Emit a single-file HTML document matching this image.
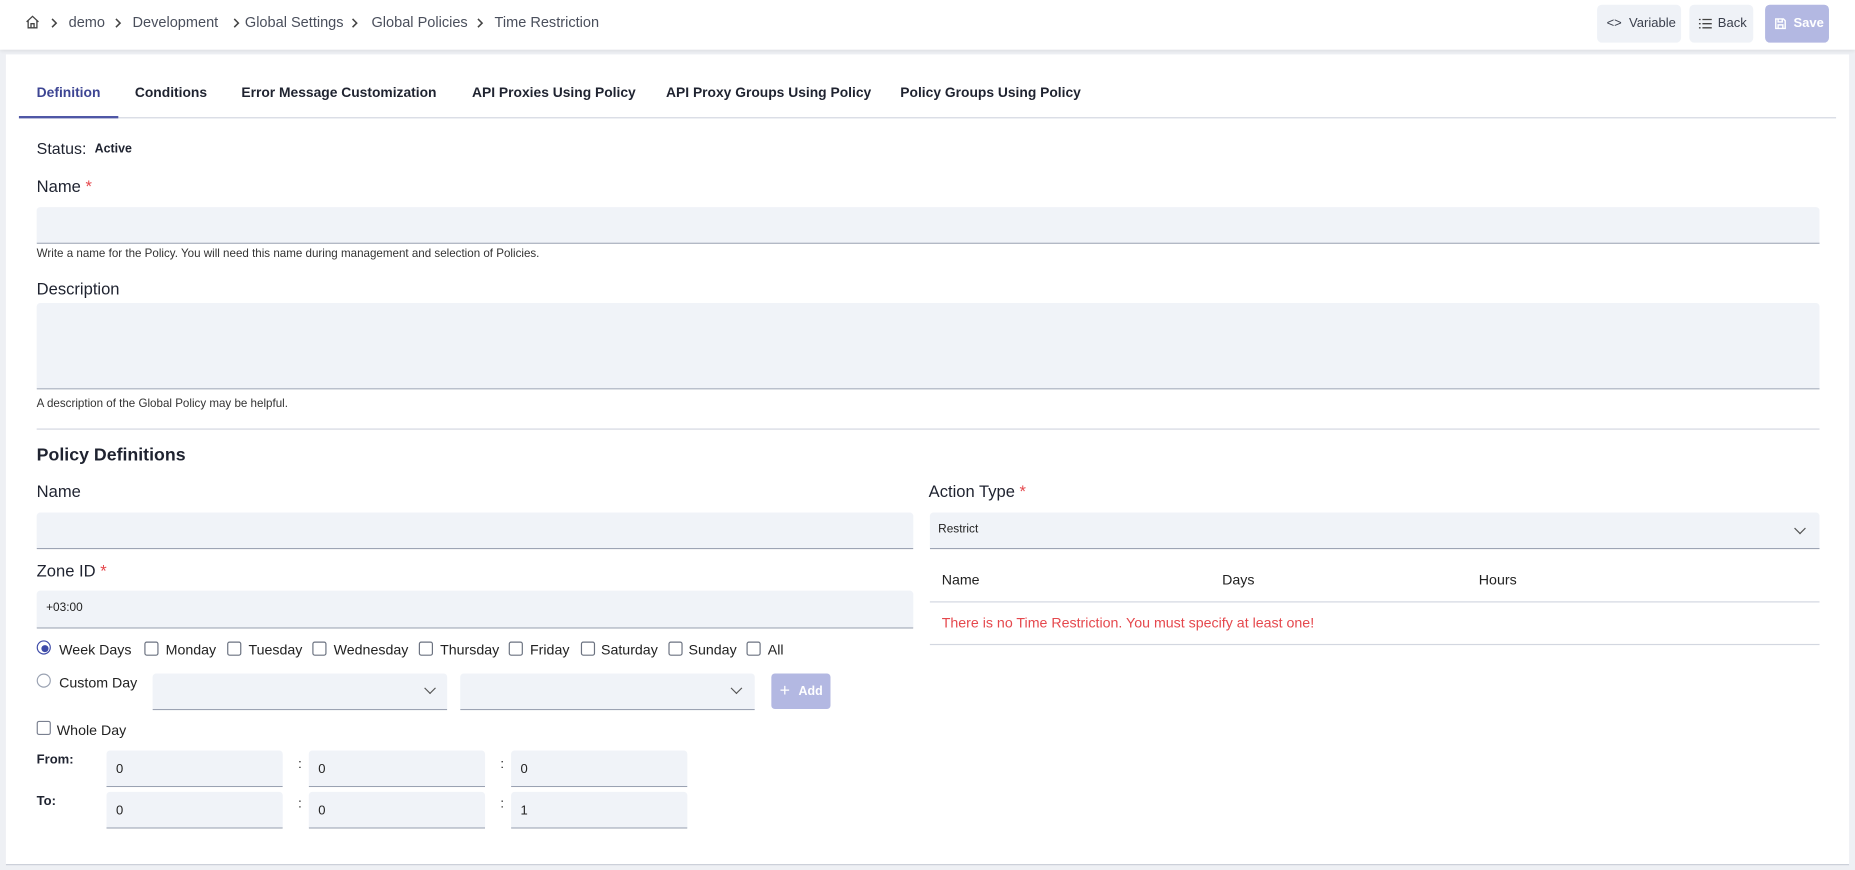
<!DOCTYPE html>
<html><head><meta charset="utf-8"><style>
html,body{margin:0;padding:0;width:1855px;height:870px;overflow:hidden;background:#eef0f4;}
#w{position:absolute;left:0;top:0;width:1568px;height:735px;transform:scale(1.18304,1.18367);transform-origin:0 0;font-family:"Liberation Sans",Arial,sans-serif;color:#1f2330;background:#eef0f4;}
.a{position:absolute;white-space:nowrap;}
.top{position:absolute;left:0;top:0;width:1568px;height:42px;background:#fff;box-shadow:0 1px 3px rgba(0,0,0,.08);}
.card{position:absolute;left:5px;top:46px;width:1558px;height:684px;background:#fff;border-bottom:1px solid #c8ccd6;}
.bc{font-size:12.3px;color:#4a4f5c;top:12px;line-height:14px;}
.chv{position:absolute;top:15px;}
.btn{position:absolute;top:4px;height:32px;border-radius:4px;background:#eff2f7;font-size:11px;color:#3a3f4c;line-height:32px;}
.tab{top:72px;font-size:11.7px;font-weight:bold;line-height:14px;color:#1f2330;}
.lbl{font-size:14px;line-height:16px;color:#1f2330;}
.req{color:#e5484d;}
.in{position:absolute;background:#f0f3f8;border-bottom:1px solid #9aa2b2;border-radius:3px 3px 0 0;}
.help{font-size:9.8px;color:#333;line-height:12px;}
.sm{font-size:11px;color:#222;line-height:12px;}
.cb{position:absolute;width:10px;height:10px;border:1px solid #6b7280;border-radius:2px;background:#fff;}
.day{font-size:12px;line-height:14px;color:#222;}
.chev{position:absolute;width:6px;height:6px;border-right:1.2px solid #555;border-bottom:1.2px solid #555;transform:rotate(45deg);}
</style></head><body><div id="w">
<div class="top"></div>
<svg class="a" style="left:21px;top:12px" width="13" height="13" viewBox="0 0 13 13" fill="none" stroke="#444" stroke-width="1.1"><path d="M1.5 6.5 L6.5 1.8 L11.5 6.5 M2.8 5.3 V11.5 H10.2 V5.3 M5.2 11.5 V8 H7.8 V11.5"/></svg>
<svg class="chv" style="left:43px" width="6" height="9" viewBox="0 0 6 9" fill="none" stroke="#444" stroke-width="1.3"><path d="M1 1L4.5 4.5L1 8"/></svg>
<div class="a bc" style="left:58px">demo</div>
<svg class="chv" style="left:97px" width="6" height="9" viewBox="0 0 6 9" fill="none" stroke="#444" stroke-width="1.3"><path d="M1 1L4.5 4.5L1 8"/></svg>
<div class="a bc" style="left:112px">Development</div>
<svg class="chv" style="left:197px" width="6" height="9" viewBox="0 0 6 9" fill="none" stroke="#444" stroke-width="1.3"><path d="M1 1L4.5 4.5L1 8"/></svg>
<div class="a bc" style="left:207px">Global Settings</div>
<svg class="chv" style="left:297px" width="6" height="9" viewBox="0 0 6 9" fill="none" stroke="#444" stroke-width="1.3"><path d="M1 1L4.5 4.5L1 8"/></svg>
<div class="a bc" style="left:314px">Global Policies</div>
<svg class="chv" style="left:403px" width="6" height="9" viewBox="0 0 6 9" fill="none" stroke="#444" stroke-width="1.3"><path d="M1 1L4.5 4.5L1 8"/></svg>
<div class="a bc" style="left:418px">Time Restriction</div>

<div class="btn" style="left:1350px;width:71px;"><span style="position:absolute;left:8px;font-size:11px;">&lt;&gt;</span><span style="position:absolute;left:27px;">Variable</span></div>
<div class="btn" style="left:1428px;width:54px;"><svg style="position:absolute;left:8px;top:11px" width="11" height="10" viewBox="0 0 11 10" stroke="#444" stroke-width="1.1"><path d="M0 1.5H1.5M3 1.5H11M0 5H1.5M3 5H11M0 8.5H1.5M3 8.5H11"/></svg><span style="position:absolute;left:24px;">Back</span></div>
<div class="btn" style="left:1492px;width:54px;background:#b3b8e2;color:#fff;font-weight:bold;"><svg style="position:absolute;left:8px;top:11px" width="10" height="10" viewBox="0 0 10 10" fill="none" stroke="#fff" stroke-width="1.2"><path d="M1 1H7.5L9 2.5V9H1Z M3 1V3.5H6.5V1 M3 9V6H7V9"/></svg><span style="position:absolute;left:24px;">Save</span></div>

<div class="card"></div>
<div class="a tab" style="left:31px;color:#3d4593;">Definition</div>
<div class="a tab" style="left:114px">Conditions</div>
<div class="a tab" style="left:204px">Error Message Customization</div>
<div class="a tab" style="left:399px">API Proxies Using Policy</div>
<div class="a tab" style="left:563px">API Proxy Groups Using Policy</div>
<div class="a tab" style="left:761px">Policy Groups Using Policy</div>
<div class="a" style="left:16px;top:99px;width:1536px;height:1px;background:#d3d7e0"></div>
<div class="a" style="left:16px;top:98px;width:84px;height:2px;background:#4f57a6"></div>

<div class="a lbl" style="left:31px;top:118px;font-size:13.5px">Status:</div>
<div class="a" style="left:80px;top:120px;font-size:10.5px;font-weight:bold;line-height:12px">Active</div>
<div class="a lbl" style="left:31px;top:149px">Name <span class="req">*</span></div>
<div class="in" style="left:31px;top:175px;width:1507px;height:30px"></div>
<div class="a help" style="left:31px;top:209px">Write a name for the Policy. You will need this name during management and selection of Policies.</div>
<div class="a lbl" style="left:31px;top:236px">Description</div>
<div class="in" style="left:31px;top:256px;width:1507px;height:72px"></div>
<div class="a help" style="left:31px;top:336px">A description of the Global Policy may be helpful.</div>
<div class="a" style="left:31px;top:362px;width:1507px;height:1px;background:#d3d7e0"></div>

<div class="a" style="left:31px;top:376px;font-size:15px;font-weight:bold;line-height:17px">Policy Definitions</div>
<div class="a lbl" style="left:31px;top:407px">Name</div>
<div class="in" style="left:31px;top:433px;width:741px;height:30px"></div>
<div class="a lbl" style="left:785px;top:407px">Action Type <span class="req">*</span></div>
<div class="in" style="left:786px;top:433px;width:752px;height:30px"></div>
<div class="a sm" style="left:793px;top:442px;font-size:10px">Restrict</div>
<div class="chev" style="left:1518px;top:443px"></div>

<div class="a lbl" style="left:31px;top:474px">Zone ID <span class="req">*</span></div>
<div class="in" style="left:31px;top:499px;width:741px;height:31px"></div>
<div class="a sm" style="left:39px;top:508px;font-size:10px">+03:00</div>

<div class="a sm" style="left:796px;top:484px;font-size:12px">Name</div>
<div class="a sm" style="left:1033px;top:484px;font-size:12px">Days</div>
<div class="a sm" style="left:1250px;top:484px;font-size:12px">Hours</div>
<div class="a" style="left:786px;top:508px;width:752px;height:1px;background:#d3d7e0"></div>
<div class="a" style="left:796px;top:519px;font-size:12px;line-height:14px;color:#e5484d">There is no Time Restriction. You must specify at least one!</div>
<div class="a" style="left:786px;top:544px;width:752px;height:1px;background:#d3d7e0"></div>

<div class="a" style="left:31px;top:541px;width:10px;height:10px;border:1.5px solid #3d4aa8;border-radius:50%;background:#fff"></div>
<div class="a" style="left:34.5px;top:544.5px;width:6px;height:6px;border-radius:50%;background:#3d4aa8"></div>
<div class="a day" style="left:50px;top:542px">Week Days</div>
<div class="cb" style="left:122px;top:542px"></div><div class="a day" style="left:140px;top:542px">Monday</div>
<div class="cb" style="left:192px;top:542px"></div><div class="a day" style="left:210px;top:542px">Tuesday</div>
<div class="cb" style="left:264px;top:542px"></div><div class="a day" style="left:282px;top:542px">Wednesday</div>
<div class="cb" style="left:354px;top:542px"></div><div class="a day" style="left:372px;top:542px">Thursday</div>
<div class="cb" style="left:430px;top:542px"></div><div class="a day" style="left:448px;top:542px">Friday</div>
<div class="cb" style="left:491px;top:542px"></div><div class="a day" style="left:508px;top:542px">Saturday</div>
<div class="cb" style="left:565px;top:542px"></div><div class="a day" style="left:582px;top:542px">Sunday</div>
<div class="cb" style="left:631px;top:542px"></div><div class="a day" style="left:649px;top:542px">All</div>

<div class="a" style="left:31px;top:569px;width:10px;height:10px;border:1.2px solid #9aa2b2;border-radius:50%;background:#fff"></div>
<div class="a day" style="left:50px;top:570px">Custom Day</div>
<div class="in" style="left:129px;top:569px;width:249px;height:30px"></div>
<div class="chev" style="left:360px;top:578px"></div>
<div class="in" style="left:389px;top:569px;width:249px;height:30px"></div>
<div class="chev" style="left:619px;top:578px"></div>
<div class="a" style="left:652px;top:569px;width:50px;height:30px;background:#b3b8e2;border-radius:3px;color:#fff;font-size:10.5px;font-weight:bold;line-height:30px"><span style="position:absolute;left:7px;font-size:15px;font-weight:normal">+</span><span style="position:absolute;left:23px">Add</span></div>

<div class="cb" style="left:31px;top:609px;border-color:#7a8090"></div>
<div class="a day" style="left:48px;top:610px">Whole Day</div>

<div class="a" style="left:31px;top:636px;font-size:11px;font-weight:bold;line-height:13px">From:</div>
<div class="in" style="left:90px;top:634px;width:149px;height:30px"></div><div class="a sm" style="left:98px;top:644px">0</div>
<div class="a sm" style="left:252px;top:640px">:</div>
<div class="in" style="left:261px;top:634px;width:149px;height:30px"></div><div class="a sm" style="left:269px;top:644px">0</div>
<div class="a sm" style="left:423px;top:640px">:</div>
<div class="in" style="left:432px;top:634px;width:149px;height:30px"></div><div class="a sm" style="left:440px;top:644px">0</div>

<div class="a" style="left:31px;top:671px;font-size:11px;font-weight:bold;line-height:13px">To:</div>
<div class="in" style="left:90px;top:669px;width:149px;height:30px"></div><div class="a sm" style="left:98px;top:679px">0</div>
<div class="a sm" style="left:252px;top:673px">:</div>
<div class="in" style="left:261px;top:669px;width:149px;height:30px"></div><div class="a sm" style="left:269px;top:679px">0</div>
<div class="a sm" style="left:423px;top:673px">:</div>
<div class="in" style="left:432px;top:669px;width:149px;height:30px"></div><div class="a sm" style="left:440px;top:679px">1</div>
</div></body></html>
